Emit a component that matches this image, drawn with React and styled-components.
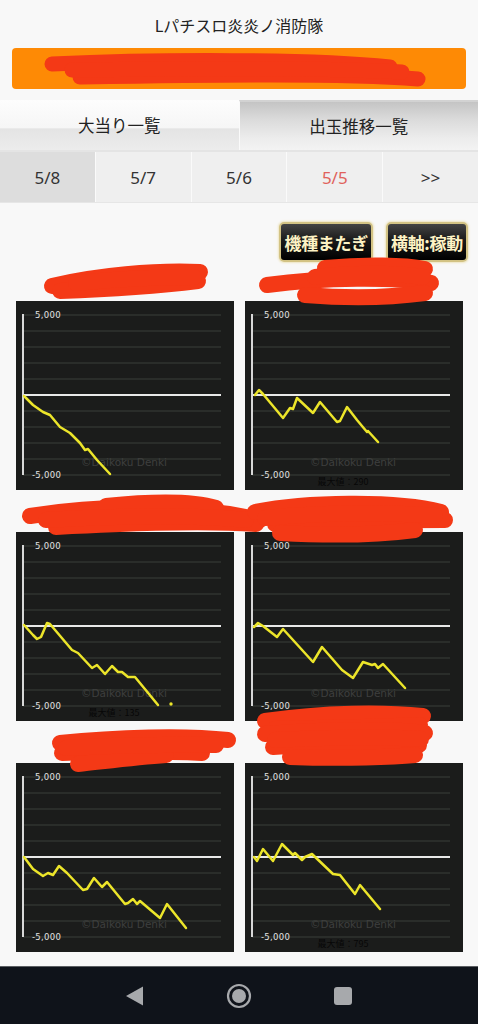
import styled, { createGlobalStyle } from 'styled-components'

const GlobalStyle = createGlobalStyle`
    html, body {
        margin: 0;
        padding: 0;
        background: #f8f8f8;
    }
    body {
        font-family: "Noto Sans", "Noto Sans CJK JP", sans-serif;
    }
`

const RED = '#f43916'

const charts = [
    {
        points: '8,95 17,104 27,111 34,114 44,126 54,132 64,142 69,149 72,148 81,159 94,173',
        scribble: ['M36 27 C 80 16, 140 11, 184 13', 'M44 32 C 100 30, 150 26, 182 22', 'M60 24 C 100 20, 150 18, 178 18'],
    },
    {
        points: '10,94 14,89 18,93 38,117 45,107 48,108 52,97 68,112 75,101 92,121 95,120 102,106 112,119 122,131 123,130 133,141',
        max: '最大値：290',
        scribble: [
            'M80 9 C 120 5, 160 6, 180 10',
            'M22 26 C 80 18, 150 18, 186 24',
            'M60 36 C 110 40, 150 38, 180 34',
            'M70 18 C 110 14, 150 14, 178 18',
        ],
    },
    {
        points: '8,93 17,103 21,107 25,105 31,91 34,92 56,118 62,121 76,136 81,133 89,142 96,134 102,140 106,140 112,145 119,145 142,173',
        dot: [155, 172],
        max: '最大値：135',
        scribble: [
            'M14 26 C 80 15, 170 13, 244 30',
            'M40 37 C 100 34, 180 30, 240 34',
            'M90 16 C 140 11, 180 12, 200 18',
            'M30 30 C 100 26, 170 24, 230 30',
        ],
    },
    {
        points: '9,95 13,91 18,94 32,105 38,97 68,130 77,115 97,138 108,146 118,130 127,133 130,132 133,136 138,132 160,156',
        max: '最大値：',
        scribble: [
            'M10 22 C 60 12, 150 10, 196 22',
            'M30 34 C 90 30, 160 30, 200 30',
            'M35 43 C 90 46, 140 44, 170 40',
            'M20 28 C 80 22, 150 22, 190 26',
            'M20 231 C 80 222, 140 222, 178 226',
            'M30 239 C 90 237, 150 237, 175 235',
        ],
    },
    {
        points: '8,94 17,106 27,113 32,110 37,112 43,103 51,110 67,127 71,126 78,115 86,124 91,119 109,141 112,140 117,136 121,141 124,138 144,155 151,141 170,165',
        scribble: [
            'M44 22 C 100 16, 170 14, 212 19',
            'M46 32 C 100 30, 150 30, 186 32',
            'M62 43 C 90 40, 120 36, 150 34',
            'M50 27 C 100 24, 150 23, 200 24',
        ],
    },
    {
        points: '9,94 12,98 18,86 28,98 37,81 48,92 50,90 57,97 60,94 67,91 88,111 95,112 110,131 115,122 135,146',
        max: '最大値：795',
        scribble: [
            'M20 13 C 80 8, 150 8, 180 12',
            'M28 26 C 80 22, 140 22, 174 24',
            'M45 36 C 100 38, 150 36, 170 34',
            'M30 19 C 80 16, 140 16, 176 18',
        ],
    },
]

const dates = ['5/8', '5/7', '5/6', '5/5', '>>']

const Chart = ({ points, dot, max }) => {
    const grid = Array.from({ length: 11 }, (_, i) => 14 + i * 16)
    return (
        <ChartSvg viewBox="0 0 218 189" width="218" height="189">
            <rect width="218" height="189" fill="#1b1c1b" />
            {grid.map((y, i) => (
                <line
                    key={i}
                    x1="7"
                    x2="205"
                    y1={y}
                    y2={y}
                    stroke={i === 5 ? '#e8e8e8' : '#3b3e3b'}
                    strokeWidth={i === 5 ? 2 : 1}
                />
            ))}
            <line x1="7" x2="7" y1="13" y2="174" stroke="#d8d8d8" strokeWidth="2" />
            <AxisText x="19" y="16.5">5,000</AxisText>
            <AxisText x="16" y="176.5">-5,000</AxisText>
            <Watermark x="108" y="165" textAnchor="middle">©Daikoku Denki</Watermark>
            <polyline
                points={points}
                fill="none"
                stroke="#ece52a"
                strokeWidth="2.5"
                strokeLinejoin="round"
                strokeLinecap="round"
            />
            {dot && <circle cx={dot[0]} cy={dot[1]} r="1.7" fill="#ece52a" />}
            {max && (
                <MaxText x="98" y="184" textAnchor="middle">
                    {max}
                </MaxText>
            )}
        </ChartSvg>
    )
}

const Scribble = ({ paths, width, height, stroke = 16 }) => (
    <ScribbleSvg width={width} height={height} viewBox={`0 0 ${width} ${height}`}>
        {paths.map((d, i) => (
            <path key={i} d={d} fill="none" stroke={RED} strokeWidth={stroke} strokeLinecap="round" />
        ))}
    </ScribbleSvg>
)

const App = () => {
    return (
        <Page>
            <GlobalStyle />
            <Title>Lパチスロ炎炎ノ消防隊</Title>
            <Banner>
                <Scribble
                    width={454}
                    height={41}
                    stroke={15}
                    paths={[
                        'M40 16 C 150 11, 300 11, 378 19',
                        'M68 29 C 200 27, 330 25, 406 31',
                        'M60 22 C 200 20, 320 20, 390 24',
                    ]}
                />
            </Banner>
            <Tabs>
                <Tab>大当り一覧</Tab>
                <Tab $active>出玉推移一覧</Tab>
            </Tabs>
            <DateRow>
                {dates.map((d, i) => (
                    <DateCell key={d} $current={i === 0} $holiday={d === '5/5'}>
                        {d}
                    </DateCell>
                ))}
            </DateRow>
            <ToolRow>
                <GoldButton>機種またぎ</GoldButton>
                <GoldButton>横軸:稼動</GoldButton>
            </ToolRow>
            <ChartGrid>
                {charts.map((c, i) => (
                    <Card key={i}>
                        <CardLabel>
                            <Scribble width={218} height={42} paths={c.scribble} />
                        </CardLabel>
                        <Chart points={c.points} dot={c.dot} max={c.max} />
                    </Card>
                ))}
            </ChartGrid>
            <NavBar>
                <NavItem>
                    <svg width="20" height="22" viewBox="0 0 20 22">
                        <path d="M1 11 L18 1.5 L18 20.5 Z" fill="#a7a9ac" strokeLinejoin="round" />
                    </svg>
                </NavItem>
                <NavItem>
                    <svg width="26" height="26" viewBox="0 0 26 26">
                        <circle cx="13" cy="13" r="11" fill="none" stroke="#a7a9ac" strokeWidth="2.2" />
                        <circle cx="13" cy="13" r="7" fill="#a7a9ac" />
                    </svg>
                </NavItem>
                <NavItem>
                    <svg width="20" height="20" viewBox="0 0 20 20">
                        <rect x="1" y="1" width="18" height="18" rx="3" fill="#a7a9ac" />
                    </svg>
                </NavItem>
            </NavBar>
        </Page>
    )
}

const Page = styled.div`
    width: 478px;
    height: 1024px;
    display: flex;
    flex-direction: column;
    background: #f8f8f8;
    overflow: hidden;
`

const Title = styled.div`
    height: 48px;
    line-height: 50px;
    text-align: center;
    font-size: 16px;
    color: #222;
    font-family: "Noto Sans CJK JP", sans-serif;
`

const Banner = styled.div`
    position: relative;
    height: 41px;
    margin: 0 12px;
    background: #fe8a05;
    border-radius: 4px;
`

const ScribbleSvg = styled.svg`
    position: absolute;
    left: 0;
    top: 0;
    overflow: visible;
    z-index: 2;
    pointer-events: none;
`

const Tabs = styled.div`
    display: flex;
    height: 50px;
    margin-top: 11px;
    border-bottom: 2px solid #e4e4e4;
`

const Tab = styled.div`
    flex: 1;
    display: flex;
    align-items: center;
    justify-content: center;
    font-size: 16.5px;
    color: #222;
    font-family: "Noto Sans CJK JP", sans-serif;
    background: ${(p) =>
        p.$active
            ? 'linear-gradient(#c4c4c4 0%, #dadada 35%, #ececec 75%, #f3f3f3 100%)'
            : 'linear-gradient(#fdfdfd 0%, #f6f6f6 55%, #e4e4e4 58%, #ececec 100%)'};
    border-top: ${(p) => (p.$active ? '2px solid #d2d2d2' : '0')};
    border-left: ${(p) => (p.$active ? '1px solid #fafafa' : '0')};
    box-sizing: border-box;
`

const DateRow = styled.div`
    display: flex;
    height: 50px;
    border-bottom: 1px solid #e6e6e6;
`

const DateCell = styled.div`
    flex: 1;
    display: flex;
    align-items: center;
    justify-content: center;
    font-size: 17px;
    color: ${(p) => (p.$holiday ? '#e0625c' : '#333')};
    background: ${(p) => (p.$current ? '#dddddd' : '#efefef')};
    border-left: 1px solid #fafafa;
    &:first-child {
        border-left: 0;
    }
`

const ToolRow = styled.div`
    display: flex;
    justify-content: flex-end;
    gap: 13px;
    padding: 19px 10px 0 0;
`

const GoldButton = styled.div`
    height: 40px;
    box-sizing: border-box;
    padding: 0 3px;
    display: flex;
    align-items: center;
    font-family: "Noto Sans CJK JP", sans-serif;
    font-weight: 700;
    font-size: 17px;
    letter-spacing: -0.3px;
    color: #fdf2c4;
    background: linear-gradient(#444 0%, #1a1a1a 45%, #000 100%);
    border: 2px solid #d3c384;
    border-radius: 5px;
    box-shadow: 0 0 2px 1px #efe6c2;
`

const ChartGrid = styled.div`
    display: grid;
    grid-template-columns: 218px 218px;
    column-gap: 11px;
    row-gap: 3px;
    padding-left: 16px;
`

const Card = styled.div`
    display: flex;
    flex-direction: column;
`

const CardLabel = styled.div`
    position: relative;
    height: 39px;
    z-index: 2;
    & > svg {
        top: -3px;
    }
`

const ChartSvg = styled.svg`
    display: block;
    font-family: "DejaVu Sans", sans-serif;
`

const AxisText = styled.text`
    font-size: 8.5px;
    fill: #e2e2e2;
    letter-spacing: 0.3px;
`

const Watermark = styled.text`
    font-size: 10.5px;
    fill: #3e3f3e;
`

const MaxText = styled.text`
    font-size: 9px;
    fill: #070707;
    font-family: "Noto Sans CJK JP", sans-serif;
`

const NavBar = styled.div`
    margin-top: auto;
    height: 57px;
    background: #0f131a;
    border-top: 1px solid #5c5f63;
    display: flex;
    justify-content: center;
    align-items: center;
`

const NavItem = styled.div`
    width: 104px;
    display: flex;
    justify-content: center;
    align-items: center;
    & svg {
        display: block;
    }
`

export default App
